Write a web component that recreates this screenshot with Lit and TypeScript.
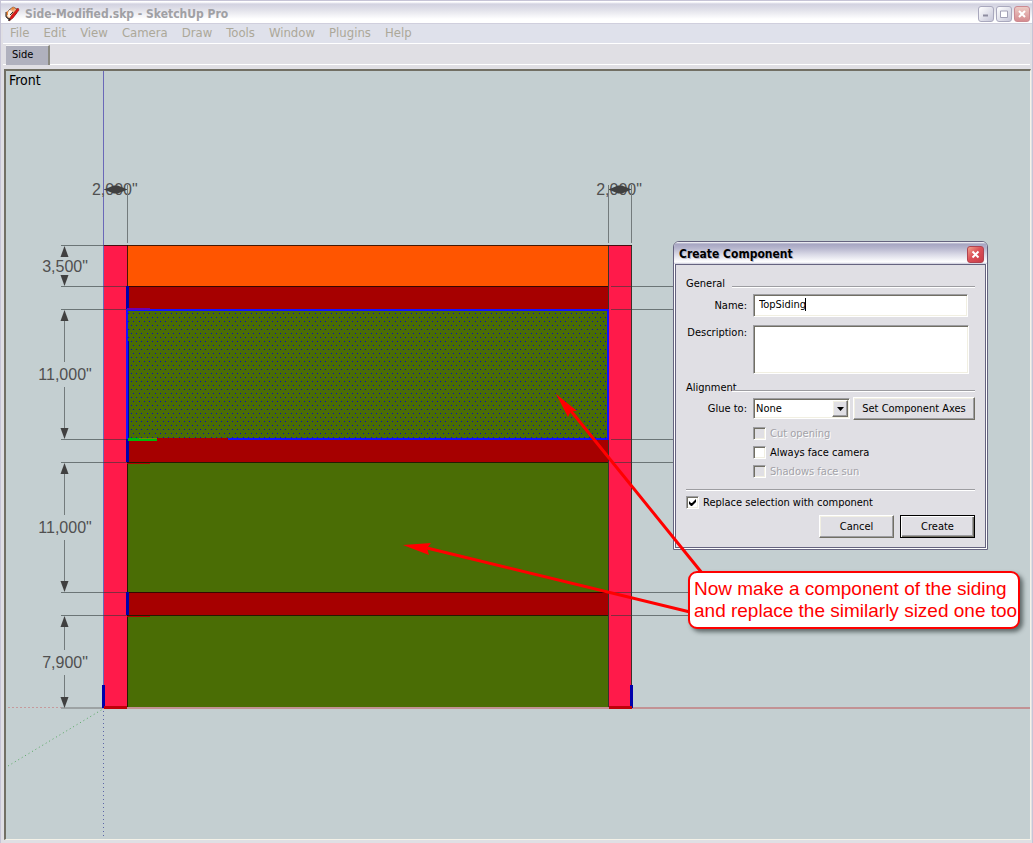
import { LitElement, html, svg, css } from "lit";
import { customElement, property, state } from "lit/decorators.js";

const MENUS = ["File", "Edit", "View", "Camera", "Draw", "Tools", "Window", "Plugins", "Help"];

interface Dimension {
  top: number;
  bottom: number;
  label: string;
}

const DIMENSIONS: Dimension[] = [
  { top: 174, bottom: 215, label: '3,500"' },
  { top: 238, bottom: 368, label: '11,000"' },
  { top: 391, bottom: 521, label: '11,000"' },
  { top: 544, bottom: 637, label: '7,900"' },
];

/** The drawing area: model faces, edges, axes and dimensions. */
@customElement("model-view")
class ModelView extends LitElement {
  static styles = css`
    :host { display: block; }
    .scene { display: block; width: 100%; height: 100%; }
    .dim-text { font: 16px "Liberation Sans", sans-serif; fill: #505050; text-anchor: middle; }
    .dim-line { stroke: #737b7c; stroke-width: 1; }
    .arrow { fill: #404040; }
    .extension { stroke: #303838; stroke-opacity: 0.6; stroke-width: 1; }
    .post { fill: #ff1a4a; }
    .board { fill: #a60000; }
    .siding { fill: #4a6d05; }
    .fascia { fill: #ff5500; }
    .dot { fill: #0808c8; }
    .edge { fill: none; stroke: #1a0800; stroke-opacity: 0.8; stroke-width: 1; }
    .selected { fill: none; stroke: #1414ff; stroke-width: 2; }
    .hidden-edge { stroke: #0000ac; stroke-width: 3; }
    .base { stroke: #bf0008; stroke-width: 3; }
    .mark { stroke: #b40000; stroke-width: 1; }
  `;

  private verticalDimension(d: Dimension) {
    const mid = Math.round((d.top + d.bottom) / 2);
    const long = d.bottom - d.top > 60;
    return svg`
      ${long ? svg`
        <line class="dim-line" x1="58.5" x2="58.5" y1=${d.top + 10} y2=${mid - 12}></line>
        <line class="dim-line" x1="58.5" x2="58.5" y1=${mid + 13} y2=${d.bottom - 10}></line>` : null}
      <polygon class="arrow" points="58.5,${d.top + 1} 62.5,${d.top + 12} 54.5,${d.top + 12}"></polygon>
      <polygon class="arrow" points="58.5,${d.bottom} 62.5,${d.bottom - 11} 54.5,${d.bottom - 11}"></polygon>
      <text class="dim-text" x="59" y=${mid + 6}>${d.label}</text>`;
  }

  private widthDimension(left: number, right: number) {
    const mid = (left + right) / 2;
    return svg`
      <text class="dim-text" x=${mid - 1} y="124">2,000"</text>
      <line class="dim-line" x1=${left} x2=${right} y1="118.5" y2="118.5"></line>
      <polygon class="arrow" points="${left},118.5 ${mid - 2},114.5 ${mid + 2},114.5 ${right},118.5 ${mid + 2},122.5 ${mid - 2},122.5"></polygon>
      <line class="dim-line" x1=${right} x2=${right} y1="114" y2="172"></line>`;
  }

  render() {
    return html`
      <svg class="scene" role="img" aria-label="Front view of the side panel">
        <defs>
          <pattern id="dots" width="16" height="8" patternUnits="userSpaceOnUse" x="122" y="242">
            ${[[0, 0], [5, 0], [11, 0], [3, 4], [8, 4], [13, 4]].map(
              ([x, y]) => svg`<rect class="dot" x=${x} y=${y} width="1" height="1"></rect>`
            )}
          </pattern>
        </defs>

        <line x1="2" x2="97" y1="636.5" y2="636.5" stroke="#c69a9c" stroke-dasharray="2 2"></line>
        <line x1="2" x2="97" y1="695" y2="638" stroke="#56a862" stroke-dasharray="1 3"></line>
        <line x1="97.5" x2="97.5" y1="640" y2="766" stroke="#5c66a6" stroke-dasharray="1 3"></line>
        <line x1="97" x2="100%" y1="637" y2="637" stroke="#c29294" stroke-width="2"></line>

        <rect class="fascia" x="121" y="174" width="481" height="41"></rect>
        <rect class="board" x="121" y="215" width="481" height="23"></rect>
        <rect class="siding" x="121" y="238" width="481" height="130"></rect>
        <rect x="122" y="242" width="480" height="125" fill="url(#dots)"></rect>
        <rect class="board" x="121" y="367" width="481" height="24"></rect>
        <rect class="siding" x="121" y="391" width="481" height="130"></rect>
        <rect class="board" x="121" y="521" width="481" height="23"></rect>
        <rect class="siding" x="121" y="544" width="481" height="92"></rect>
        <rect class="post" x="98" y="174" width="23" height="463"></rect>
        <rect class="post" x="603" y="174" width="22" height="463"></rect>

        <path class="edge" d="M121 215.5H602M121 391.5H602M121 521.5H602M121 544.5H602M121.5 174V636M602.5 174V636M625.5 174V636M98 174.5H626"></path>
        <path d="M97.5 0V636" stroke="#6a68b8" fill="none"></path>

        ${[174, 215, 238, 368, 391, 521, 544].map(
          (y) => svg`<line class="extension" x1="55" x2="98" y1=${y + 0.5} y2=${y + 0.5}></line>`
        )}
        <line x1="55" x2="97" y1="637" y2="637" stroke="#9da3a4" stroke-width="2"></line>
        ${[215, 238, 368, 391, 521, 544].map(
          (y) => svg`
            <line class="extension" x1="98" x2="121" y1=${y + 0.5} y2=${y + 0.5}></line>
            <line class="extension" x1="605" x2="690" y1=${y + 0.5} y2=${y + 0.5}></line>`
        )}

        <line class="hidden-edge" x1="121.5" x2="121.5" y1="215" y2="238"></line>
        <line class="hidden-edge" x1="121.5" x2="121.5" y1="270" y2="391"></line>
        <line class="hidden-edge" x1="121.5" x2="121.5" y1="521" y2="544"></line>
        <line class="hidden-edge" x1="97.5" x2="97.5" y1="614" y2="637"></line>
        <line class="hidden-edge" x1="625.5" x2="625.5" y1="614" y2="637"></line>
        <path class="selected" d="M121 368V239H602V368H222"></path>
        <path class="mark" d="M121 392.5H144M121 545.5H144"></path>
        <line x1="121" x2="144" y1="238" y2="238" stroke="#6a00b4" stroke-width="2"></line>
        <line x1="122" x2="151" y1="368.5" y2="368.5" stroke="#00b808" stroke-width="3"></line>
        <line x1="133" x2="151" y1="367.5" y2="367.5" stroke="#6f8a00"></line>
        <path class="base" d="M98 636.5H121M603 636.5H626"></path>

        ${DIMENSIONS.map((d) => this.verticalDimension(d))}
        ${this.widthDimension(98, 121.5)}
        ${this.widthDimension(602.5, 625.5)}
        <line class="dim-line" x1="602.5" x2="602.5" y1="114" y2="172"></line>
      </svg>`;
  }
}

/** The floating dialog that names and aligns the new component. */
@customElement("component-dialog")
class ComponentDialog extends LitElement {
  @state() private name = "TopSiding";

  static styles = css`
    :host { display: block; font: 11px/14px "DejaVu Sans Condensed", sans-serif; color: #000; }
    * { box-sizing: border-box; }
    button, input, textarea, select { font: inherit; color: inherit; margin: 0; border-radius: 0; }
    .frame {
      border: 1px solid #65637f; border-radius: 6px 6px 0 0; padding: 0 1px 1px;
      background: #fff; overflow: hidden;
    }
    .bar {
      display: flex; align-items: center; justify-content: space-between; height: 22px; padding: 2px 3px 0 5px; margin: 0 -1px;
      background: linear-gradient(#fff 0, #a6a5c2 2px, #b6b5cd 6px, #dcdce8 13px, #fff 20px, #cacada 22px);
    }
    .caption { margin: 0; font: bold 12px/16px "DejaVu Sans Condensed", sans-serif; text-shadow: 1px 1px 0 #b9b8cc; }
    .close {
      width: 17px; height: 17px; padding: 0; border: 1px solid #b04350; border-radius: 3px;
      background: linear-gradient(135deg, #f0a48c, #dc5058 45%, #c83c48); display: grid; place-items: center;
    }
    .body {
      display: flex; flex-direction: column; background: #e0dfe4; border: 1px solid #65637f;
      padding: 12px 10px 9px;
    }
    .heading { display: grid; grid-template-columns: 46px 1fr; align-items: center; height: 14px; }
    .heading h3 { margin: 0; font: inherit; white-space: nowrap; }
    .rule { height: 2px; border: 0; margin: 0; background: linear-gradient(#9d9da1 1px, #fff 1px); }
    .heading .rule { margin-top: 6px; }
    .row { display: grid; grid-template-columns: 61px minmax(0, 1fr); column-gap: 6px; }
    .row > label { text-align: right; white-space: nowrap; padding-top: 1px; }
    .name-row { margin-top: 3px; align-items: center; padding-right: 7px; }
    .text-row { margin-top: 8px; padding-right: 6px; }
    .field { position: relative; display: flex; }
    .sunk {
      background: #fff; border: 1px solid; border-color: #9d9da1 #fff #fff #9d9da1;
      box-shadow: inset 1px 1px 0 #716f64, inset -1px -1px 0 #f1efe2; outline: none;
    }
    .name { width: 100%; height: 23px; padding: 0 5px 3px; }
    .caret { position: absolute; left: 52px; top: 4px; width: 1px; height: 13px; background: #000; }
    .description { display: block; width: 100%; height: 49px; resize: none; padding: 3px; }
    .align { margin-top: 7px; }
    .glue-row { margin-top: 2px; align-items: center; }
    .pair { display: flex; gap: 3px; align-items: center; }
    .pick { position: relative; width: 97px; height: 21px; display: flex; flex: none; }
    .pick select { appearance: none; width: 100%; height: 100%; padding: 0 20px 0 2px; }
    .raised {
      background: #e0dfe4; border: 1px solid; border-color: #fff #716f64 #716f64 #fff;
      box-shadow: inset -1px -1px 0 #9d9da1, inset 1px 1px 0 #f1efe2; white-space: nowrap;
    }
    .drop { position: absolute; right: 2px; top: 2px; bottom: 2px; width: 16px; display: grid; place-items: center; pointer-events: none; }
    .axes { flex: 1; height: 23px; padding: 0; }
    .checks { display: flex; flex-direction: column; gap: 6px; margin: 7px 0 0 67px; }
    .check { display: flex; align-items: center; gap: 4px; height: 13px; line-height: 15px; white-space: nowrap; }
    .check.off { color: #a3a2a8; text-shadow: 1px 1px 0 #fff; }
    .check input { appearance: none; width: 13px; height: 13px; flex: none; }
    .check.off input { background: #e0dfe4; }
    .check input:checked::before {
      content: ""; display: block; width: 7px; height: 7px; margin: 2px; background: #000;
      clip-path: polygon(0 2px, 2px 4px, 3px 4px, 7px 0, 7px 3px, 3px 7px, 2px 7px, 0 5px);
    }
    .split { margin-top: 11px; }
    .replace { margin-top: 5px; }
    .actions { display: flex; justify-content: flex-end; gap: 6px; margin-top: 6px; }
    .action { width: 75px; height: 23px; padding: 0; }
    .primary { border-color: #000; box-shadow: inset 1px 1px 0 #fff, inset -1px -1px 0 #716f64, inset -2px -2px 0 #9d9da1; }
  `;

  render() {
    return html`
      <section class="frame" role="dialog" aria-labelledby="caption">
        <header class="bar">
          <h2 class="caption" id="caption">Create Component</h2>
          <button class="close" aria-label="Close">
            <svg width="9" height="9" viewBox="0 0 9 9"><path d="M1.5 1.5L7.5 7.5M7.5 1.5L1.5 7.5" stroke="#fff" stroke-width="2"></path></svg>
          </button>
        </header>
        <form class="body" @submit=${(e: Event) => e.preventDefault()}>
          <div class="heading"><h3>General</h3><hr class="rule" /></div>
          <div class="row name-row">
            <label for="name">Name:</label>
            <div class="field">
              <input class="name sunk" id="name" type="text" .value=${this.name} spellcheck="false"
                @input=${(e: Event) => (this.name = (e.target as HTMLInputElement).value)} />
              <span class="caret" aria-hidden="true"></span>
            </div>
          </div>
          <div class="row text-row">
            <label for="description">Description:</label>
            <textarea class="description sunk" id="description"></textarea>
          </div>
          <div class="heading align"><h3>Alignment</h3><hr class="rule" /></div>
          <div class="row glue-row">
            <label for="glue">Glue to:</label>
            <div class="pair">
              <div class="pick">
                <select class="sunk" id="glue"><option>None</option></select>
                <span class="drop raised" aria-hidden="true">
                  <svg width="7" height="4" viewBox="0 0 7 4"><path d="M0 0H7L3.5 4Z"></path></svg>
                </span>
              </div>
              <button class="axes raised" type="button">Set Component Axes</button>
            </div>
          </div>
          <div class="checks">
            <label class="check off"><input class="sunk" type="checkbox" disabled />Cut opening</label>
            <label class="check"><input class="sunk" type="checkbox" />Always face camera</label>
            <label class="check off"><input class="sunk" type="checkbox" disabled />Shadows face sun</label>
          </div>
          <hr class="rule split" />
          <label class="check replace"><input class="sunk" type="checkbox" checked />Replace selection with component</label>
          <div class="actions">
            <button class="action raised" type="button">Cancel</button>
            <button class="action raised primary" type="submit">Create</button>
          </div>
        </form>
      </section>`;
  }
}

@customElement("app-root")
class AppRoot extends LitElement {
  @property() title = "Side-Modified.skp - SketchUp Pro";

  static styles = css`
    :host {
      display: flex; flex-direction: column; height: 100vh; box-sizing: border-box; overflow: hidden;
      background: #e0dfe4; border: 1px solid #c6c4d6; border-bottom: 0;
      font: 13px/16px "DejaVu Sans Condensed", sans-serif; color: #000;
    }
    * { box-sizing: border-box; }
    .title-bar {
      display: flex; align-items: center; gap: 4px; height: 23px; padding: 3px 2px 0 4px; flex: none;
      background: linear-gradient(#fff 0, #fff 1px, #d2d2e0 3px, #e2e2ea 9px, #fff 18px);
      border-bottom: 1px solid #d0cfdd;
    }
    .title { margin: 0; flex: 1; font: bold 12px/16px "DejaVu Sans Condensed", sans-serif; color: #a0a0a4; }
    .controls { display: flex; gap: 2px; }
    .control {
      width: 16px; height: 16px; padding: 0; border: 1px solid #a9a8bd; border-radius: 3px;
      background: linear-gradient(135deg, #fff, #c6c6d8); display: grid; place-items: center;
    }
    .control.close { border-color: #cc8a92; background: linear-gradient(#eccac4, #d68c90); }
    .menu { display: flex; gap: 14px; height: 20px; padding: 0 7px 1px; margin: 0 2px; background: #dfe1eb; border-bottom: 1px solid #fff; flex: none; }
    .menu-item { padding: 0; border: 0; background: none; font: inherit; color: #aca899; }
    .tabs { display: flex; height: 21px; margin: 0 2px; padding: 1px 3px 0; border-bottom: 1px solid #fff; flex: none; }
    .tab {
      width: 44px; height: 20px; padding: 0 0 1px 6px; text-align: left; border: 0; border-right: 2px solid #8a8980; border-top: 1px solid #f4f4f4;
      background: #b0b1be; font: 11px/14px "DejaVu Sans Condensed", sans-serif; color: #000;
    }
    .stage {
      position: relative; flex: 1; min-height: 0; margin: 4px 1px 3px 3px; overflow: hidden; background: #c4cfd1;
      border: 2px solid; border-color: #716f64 #f4f2e8 #f4f2e8 #716f64; border-right-width: 1px; border-bottom-width: 1px;
    }
    .model { position: absolute; inset: 0; }
    .view-name { position: absolute; left: 3px; top: 1px; font-size: 14px; }
    .dialog { position: absolute; left: 667px; top: 170px; width: 315px; }
    .pointers { position: absolute; inset: 0; width: 100%; height: 100%; pointer-events: none; fill: #f00; stroke: #f00; }
    .callout {
      position: absolute; left: 682px; top: 500px; margin: 0; padding: 5px 1px 5px 4px; border: 2px solid #f00; border-radius: 9px;
      background: #fff; box-shadow: 3px 3px 4px rgba(40, 50, 50, 0.65);
      font: 19px/22px "Liberation Sans", Arial, sans-serif; color: #f00; white-space: nowrap;
    }
  `;

  render() {
    return html`
      <header class="title-bar">
        <svg width="16" height="16" viewBox="0 0 16 16" aria-hidden="true">
          <path d="M4 4L8 1L12 3L11 8L6 12L3 13L1 9Z" fill="#e9b083" stroke="#7a5a48" stroke-width="1"></path>
          <path d="M4 4L7 5L6 12L2 10Z" fill="#fff4e4"></path>
          <path d="M1 6L3 5L3 9L1 10ZM8 1L10 2L8 4L6 3Z" fill="#f08a3c"></path>
          <path d="M1 6V11L4 13M5 9L8 6" fill="none" stroke="#303030"></path>
          <path d="M13 2L6 10L4 15L8 12L14 4Z" fill="#e01818" stroke="#8c1010" stroke-width="0.6"></path>
          <path d="M3 15L4 12L6 14Z" fill="#2a2a2a"></path>
        </svg>
        <h1 class="title">${this.title}</h1>
        <div class="controls">
          <button class="control" aria-label="Minimize"><svg width="10" height="10" viewBox="0 0 10 10"><path d="M2 6.5H7" stroke="#8e8da0" stroke-width="2"></path></svg></button>
          <button class="control" aria-label="Maximize"><svg width="10" height="10" viewBox="0 0 10 10"><path d="M1.5 2H8.5V8.5H1.5Z" fill="#fff" stroke="#a3a2b6"></path></svg></button>
          <button class="control close" aria-label="Close"><svg width="10" height="10" viewBox="0 0 10 10"><path d="M2 2L8 8M8 2L2 8" stroke="#fff" stroke-width="2"></path></svg></button>
        </div>
      </header>
      <nav class="menu" aria-label="Main menu">
        ${MENUS.map((m) => html`<button class="menu-item">${m}</button>`)}
      </nav>
      <div class="tabs" role="tablist"><button class="tab" role="tab" aria-selected="true">Side</button></div>
      <main class="stage">
        <model-view class="model"></model-view>
        <span class="view-name">Front</span>
        <component-dialog class="dialog"></component-dialog>
        <svg class="pointers" aria-hidden="true">
          <path d="M565 340L696 502M421 477L684 541" stroke-width="3" fill="none"></path>
          <path d="M550 323L571 340L565 340L562 346Z" stroke="none"></path>
          <path d="M397 474L425 472L421 477L423 484Z" stroke="none"></path>
        </svg>
        <p class="callout">Now make a component of the siding<br />and replace the similarly sized one too</p>
      </main>`;
  }
}
